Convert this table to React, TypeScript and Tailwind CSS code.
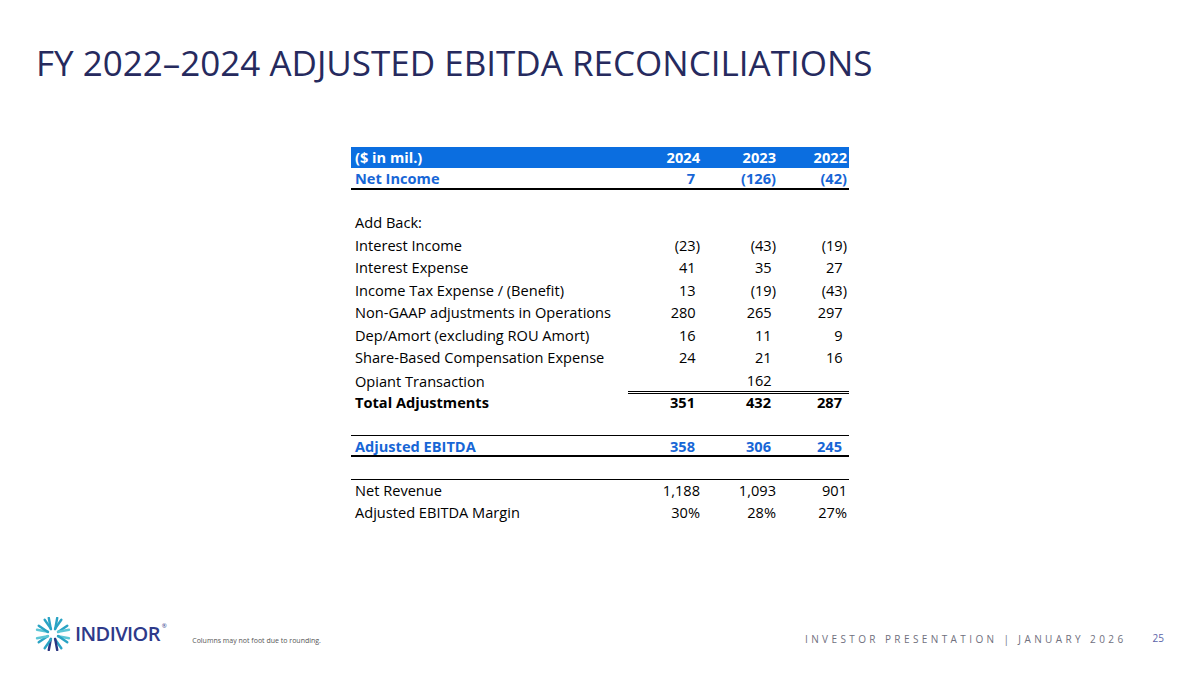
const rows: { label: string; v: string[] }[] = [
  { label: "Interest Income", v: ["(23)", "(43)", "(19)"] },
  { label: "Interest Expense", v: ["41", "35", "27"] },
  { label: "Income Tax Expense / (Benefit)", v: ["13", "(19)", "(43)"] },
  { label: "Non-GAAP adjustments in Operations", v: ["280", "265", "297"] },
  { label: "Dep/Amort (excluding ROU Amort)", v: ["16", "11", "9"] },
  { label: "Share-Based Compensation Expense", v: ["24", "21", "16"] },
];

function Num({ value }: { value: string }) {
  // accounting format: positives keep room for the closing paren
  if (value === "" || value.endsWith(")")) return <>{value}</>;
  return (
    <>
      {value}
      <span className="invisible">)</span>
    </>
  );
}

function Row({
  label,
  v,
  className = "",
  cellClass = "",
  plain = false,
}: {
  label: string;
  v: string[];
  className?: string;
  cellClass?: string;
  plain?: boolean;
}) {
  return (
    <div className={`grid grid-cols-[277px_74px_76px_71px] h-[22.5px] items-center ${className}`}>
      <div className="pl-[4px] whitespace-nowrap">{label}</div>
      {v.map((x, i) => (
        <div key={i} className={`h-full flex items-center justify-end pr-[2px] ${cellClass}`}>
          {plain ? x : <Num value={x} />}
        </div>
      ))}
    </div>
  );
}

function Logo() {
  const arms = [0, 45, 90, 135, 180, 225, 270, 315];
  return (
    <div className="flex items-center gap-[4px]">
      <svg width="36" height="34" viewBox="0 0 36 34">
        {arms.map((a) => {
          const color = a === 180 ? "#2b3580" : a === 90 || a === 270 ? "#5cc6d6" : "#2aa3c4";
          return (
            <g key={a} transform={`translate(18 17) rotate(${a})`}>
              <line x1="-2.2" y1="-5" x2="-4.2" y2="-16" stroke={color} strokeWidth="2.4" strokeLinecap="round" />
              <line x1="2.2" y1="-5" x2="4.2" y2="-16" stroke={color} strokeWidth="2.4" strokeLinecap="round" />
            </g>
          );
        })}
      </svg>
      <div className="flex items-start text-[#2e3a8a] font-semibold text-[20px] leading-none tracking-[-0.03em]">
        INDIVIOR
        <span className="text-[6px] font-normal ml-[2px] -mt-[1px]">®</span>
      </div>
    </div>
  );
}

export default function App() {
  return (
    <div
      className="w-[1200px] h-[675px] bg-white flex flex-col overflow-hidden"
      style={{ fontFamily: '"Open Sans", "Liberation Sans", sans-serif' }}
    >
      <h1 className="pl-[36px] pt-[45px] text-[35px] leading-[36px] text-[#262a5e] whitespace-nowrap">
        FY 2022–2024 ADJUSTED EBITDA RECONCILIATIONS
      </h1>

      <div className="w-[498px] mx-auto mt-[66px] text-[14.6px] text-black">
        <div className="grid grid-cols-[277px_74px_76px_71px] h-[21px] items-center bg-[#0b6ee0] text-white font-bold">
          <div className="pl-[4px]">($ in mil.)</div>
          <div className="text-right pr-[2px]">2024</div>
          <div className="text-right pr-[2px]">2023</div>
          <div className="text-right pr-[2px]">2022</div>
        </div>
        <Row
          label="Net Income"
          v={["7", "(126)", "(42)"]}
          className="text-[#1766d6] font-bold border-b-2 border-black h-[22px]"
        />
        <div className="h-[22px]" />
        <div className="h-[22.5px] flex items-center pl-[4px]">Add Back:</div>
        {rows.map((r) => (
          <Row key={r.label} label={r.label} v={r.v} />
        ))}
        <Row label="Opiant Transaction" v={["", "162", ""]} cellClass="border-b-[3px] border-double border-black" />
        <Row label="Total Adjustments" v={["351", "432", "287"]} className="font-bold" />
        <div className="h-[20px]" />
        <Row
          label="Adjusted EBITDA"
          v={["358", "306", "245"]}
          className="text-[#1766d6] font-bold border-t border-b-2 border-black"
        />
        <div className="h-[22px]" />
        <Row label="Net Revenue" v={["1,188", "1,093", "901"]} className="border-t border-black" plain />
        <Row label="Adjusted EBITDA Margin" v={["30%", "28%", "27%"]} plain />
      </div>

      <div className="mt-auto mb-[24px] flex items-center pl-[35px] pr-[36px]">
        <Logo />
        <div className="ml-[26px] mt-[14px] text-[7px] text-[#555]">Columns may not foot due to rounding.</div>
        <div className="ml-auto mt-[10px] text-[10px] tracking-[0.34em] text-[#70707e] whitespace-nowrap">
          INVESTOR PRESENTATION | JANUARY 2026
        </div>
        <div className="ml-[26px] mt-[8px] text-[10px] text-[#5b63a8]">25</div>
      </div>
    </div>
  );
}
